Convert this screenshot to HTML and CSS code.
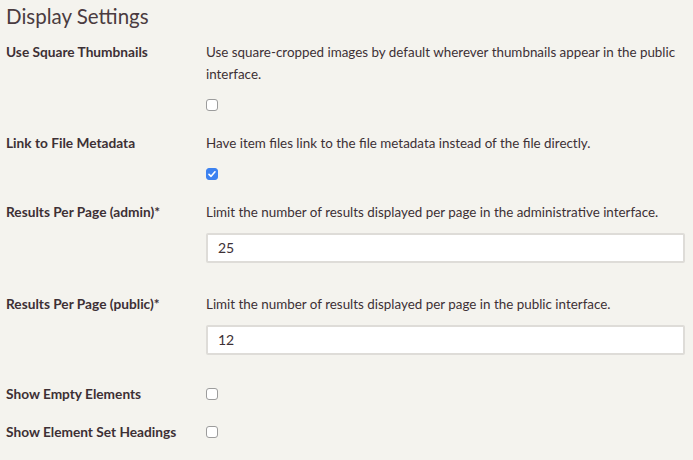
FILE: index.html
```html
<!DOCTYPE html>
<html>
<head>
<meta charset="utf-8">
<link rel="stylesheet" href="styles.css">
</head>
<body>
<section class="settings">
  <h2 class="title">Display Settings</h2>

  <div class="field">
    <label class="label">Use Square Thumbnails</label>
    <div class="inputs">
      <p class="hint">Use square-cropped images by default wherever thumbnails appear in the public interface.</p>
      <span class="check"></span>
    </div>
  </div>

  <div class="field">
    <label class="label">Link to File Metadata</label>
    <div class="inputs">
      <p class="hint">Have item files link to the file metadata instead of the file directly.</p>
      <span class="check checked"><svg viewBox="0 0 12 12" width="12" height="12"><path d="M3 6.3 L5.1 8.3 L9 3.8" fill="none" stroke="#fff" stroke-width="1.6" stroke-linecap="round" stroke-linejoin="round"/></svg></span>
    </div>
  </div>

  <div class="field spaced">
    <label class="label">Results Per Page (admin)*</label>
    <div class="inputs">
      <p class="hint">Limit the number of results displayed per page in the administrative interface.</p>
      <div class="textbox">25</div>
    </div>
  </div>

  <div class="field">
    <label class="label">Results Per Page (public)*</label>
    <div class="inputs">
      <p class="hint">Limit the number of results displayed per page in the public interface.</p>
      <div class="textbox">12</div>
    </div>
  </div>

  <div class="field inline">
    <label class="label">Show Empty Elements</label>
    <div class="inputs">
      <span class="check"></span>
    </div>
  </div>

  <div class="field inline">
    <label class="label">Show Element Set Headings</label>
    <div class="inputs">
      <span class="check"></span>
    </div>
  </div>
</section>
</body>
</html>
```
FILE: styles.css
```css
html, body {
  margin: 0;
  padding: 0;
  background: #f4f3ee;
}
body {
  font-family: Lato, "Open Sans", sans-serif;
  color: #3d3035;
}
.settings {
  padding: 3px 6px 0 6px;
  display: flex;
  flex-direction: column;
}
.title {
  margin: 0 0 11px 0;
  font-size: 20.5px;
  line-height: 27px;
  font-weight: 400;
  color: #4a3b40;
}
.field {
  display: grid;
  grid-template-columns: 200px 1fr;
  margin-bottom: 21px;
}
.field.spaced {
  margin-bottom: 23px;
}
.field.inline {
  margin-bottom: 16px;
}
.label {
  font-size: 13.7px;
  font-weight: 700;
  line-height: 22px;
}
.inputs {
  display: flex;
  flex-direction: column;
  align-items: flex-start;
  padding-right: 2px;
}
.hint {
  margin: 0;
  font-size: 13.4px;
  line-height: 22px;
}
.check {
  box-sizing: border-box;
  width: 12px;
  height: 12px;
  border: 1px solid #9c9c9c;
  border-radius: 3px;
  background: #fff;
  margin-top: 14px;
  display: flex;
}
.check.checked {
  background: #3d82f0;
  border-color: #3d82f0;
}
.check.checked svg {
  margin: -1px;
}
.field.inline .check {
  margin-top: 5px;
}
.textbox {
  box-sizing: border-box;
  width: 100%;
  height: 30px;
  margin-top: 10px;
  margin-bottom: 7px;
  background: #fff;
  border: 2px solid #dedcd8;
  border-radius: 2px;
  padding: 0 10px;
  font-size: 14px;
  line-height: 26px;
  color: #3d3035;
}
```
